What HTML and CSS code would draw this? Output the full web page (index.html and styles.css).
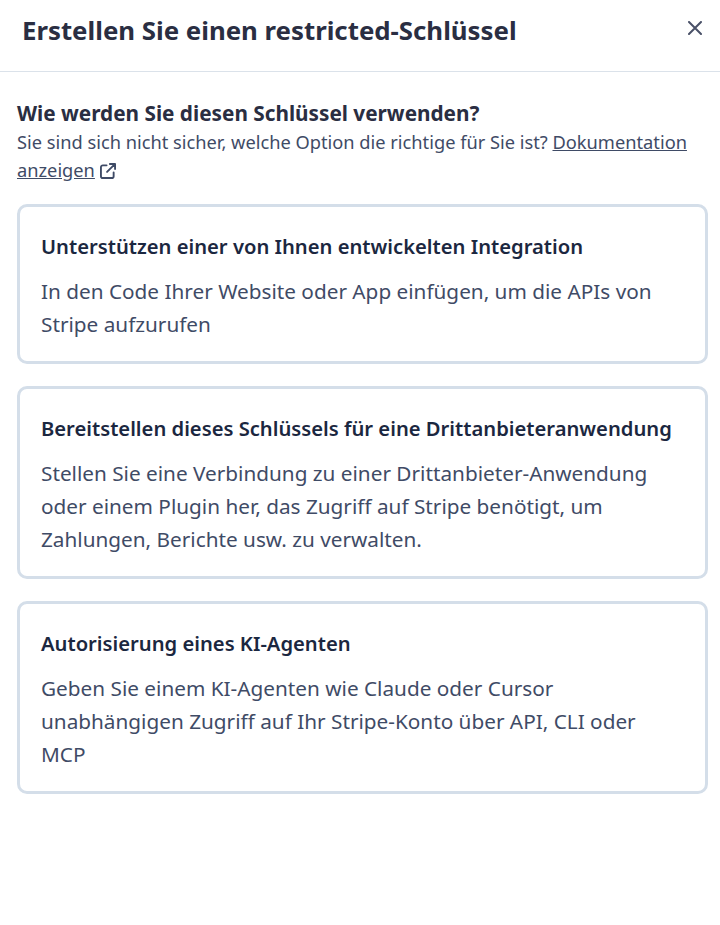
FILE: index.html
```html
<!DOCTYPE html>
<html lang="de">
<head>
    <meta charset="UTF-8">
    <title>Erstellen Sie einen restricted-Schlüssel</title>
    <link rel="stylesheet" href="styles.css">
</head>
<body>
    <header class="head">
        <h1>Erstellen Sie einen restricted-Schlüssel</h1>
        <svg class="close" width="14" height="14" viewBox="0 0 14 14"><path d="M1 1l12 12M13 1L1 13" stroke="#4a5168" stroke-width="2" stroke-linecap="round" fill="none"/></svg>
    </header>
    <main class="content">
        <h2>Wie werden Sie diesen Schlüssel verwenden?</h2>
        <p class="hint">Sie sind sich nicht sicher, welche Option die richtige für Sie ist? <a href="#">Dokumentation anzeigen</a>
            <svg class="ext" width="16" height="16" viewBox="0 0 17 17" fill="none" stroke="#3f4b66" stroke-width="2" stroke-linecap="round" stroke-linejoin="round"><path d="M7 2.500H3a2 2 0 0 0-2 2v9.500a2 2 0 0 0 2 2h9.500a2 2 0 0 0 2-2V10"/><path d="M10.500 1H16v5.500M15.500 1.500L7.500 9.500"/></svg>
        </p>
        <div class="card">
            <h3>Unterstützen einer von Ihnen entwickelten Integration</h3>
            <p>In den Code Ihrer Website oder App einfügen, um die APIs von Stripe aufzurufen</p>
        </div>
        <div class="card">
            <h3>Bereitstellen dieses Schlüssels für eine Drittanbieteranwendung</h3>
            <p>Stellen Sie eine Verbindung zu einer Drittanbieter-Anwendung oder einem Plugin her, das Zugriff auf Stripe benötigt, um Zahlungen, Berichte usw. zu verwalten.</p>
        </div>
        <div class="card">
            <h3>Autorisierung eines KI-Agenten</h3>
            <p>Geben Sie einem KI-Agenten wie Claude oder Cursor unabhängigen Zugriff auf Ihr Stripe-Konto über API, CLI oder MCP</p>
        </div>
    </main>
</body>
</html>
```
FILE: styles.css
```css
* {
    margin: 0;
    box-sizing: border-box;
}

body {
    background-color: white;
    font-family: "Noto Sans", sans-serif;
    color: #3f4b66;
}

.head {
    height: 72px;
    padding: 0 18px 0 22px;
    display: flex;
    justify-content: space-between;
    align-items: flex-start;
    border-bottom: 1px solid #dbe2ea;
}

.head h1 {
    font-size: 25.8px;
    line-height: 32px;
    margin-top: 14px;
    font-weight: 700;
    color: #2a2e42;
}

.close {
    margin-top: 21px;
}

.content {
    padding: 27px 12px 0 17px;
}

h2 {
    font-size: 20.75px;
    line-height: 28px;
    font-weight: 700;
    color: #2a2e42;
    margin-bottom: 1px;
}

.hint {
    font-size: 18.25px;
    line-height: 28px;
    margin-bottom: 20px;
}

.hint a {
    color: #3f4b66;
}

.ext {
    vertical-align: -2px;
}

.card {
    border: 3px solid #d4dee9;
    border-radius: 10px;
    padding: 25px 21px 20px;
    margin-bottom: 22px;
}

h3 {
    font-size: 20.2px;
    line-height: 28px;
    font-weight: 600;
    color: #1b2740;
    margin-bottom: 15px;
}

.card p {
    font-size: 20.75px;
    line-height: 33px;
    color: #3f4b66;
}
```
